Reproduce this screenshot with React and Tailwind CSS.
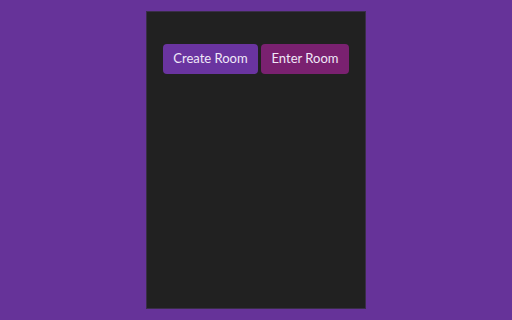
export default function App() {
  return (
    <div className="w-[512px] h-[320px] bg-[#663399] pt-[11px]" style={{ fontFamily: 'Lato, "Open Sans", sans-serif' }}>
      <div className="mx-auto ml-[146px] w-[220px] h-[298px] bg-[#212121] border border-[#3a2e48] pt-[32px] flex justify-center gap-[3px]">
        <button
          type="button"
          className="w-[95px] h-[30px] rounded-[4px] bg-[#6a34a0] text-[#f0e8f8] text-[13px]"
        >
          Create Room
        </button>
        <button
          type="button"
          className="w-[88px] h-[30px] rounded-[4px] bg-[#7a2170] text-[#f0e8f8] text-[13px]"
        >
          Enter Room
        </button>
      </div>
    </div>
  )
}
